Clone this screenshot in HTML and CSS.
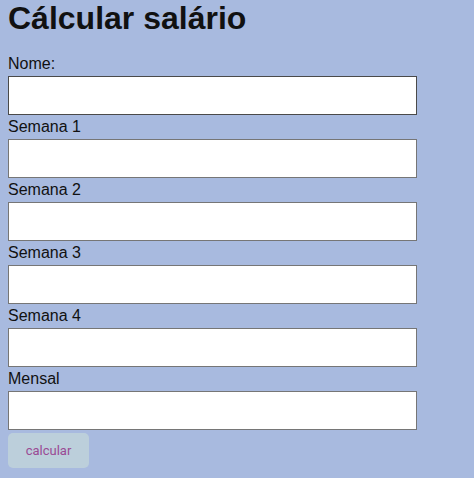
FILE: index.html
```html
<!DOCTYPE html>
<html lang="pt">
<head>
<meta charset="utf-8">
<title>Cálcular salário</title>
<link rel="stylesheet" href="styles.css">
</head>
<body>
<h1 class="title">Cálcular salário</h1>
<form class="form">
  <label class="label" for="nome">Nome:</label>
  <input class="field field-active" id="nome" type="text">
  <label class="label" for="s1">Semana 1</label>
  <input class="field" id="s1" type="text">
  <label class="label" for="s2">Semana 2</label>
  <input class="field" id="s2" type="text">
  <label class="label" for="s3">Semana 3</label>
  <input class="field" id="s3" type="text">
  <label class="label" for="s4">Semana 4</label>
  <input class="field" id="s4" type="text">
  <label class="label" for="mensal">Mensal</label>
  <input class="field" id="mensal" type="text">
  <button class="btn" type="button">calcular</button>
</form>
</body>
</html>
```
FILE: styles.css
```css
html, body {
  margin: 0;
  padding: 0;
}
body {
  background: #a8badf;
  font-family: "Liberation Sans", Arial, sans-serif;
  color: #000;
  padding: 0 8px;
}
.title {
  font-size: 32px;
  font-weight: bold;
  margin: 0;
  line-height: 37px;
  color: #111;
}
.form {
  display: flex;
  flex-direction: column;
  align-items: flex-start;
  margin-top: 18px;
}
.label {
  font-size: 16px;
  line-height: 18px;
  color: #111;
}
.field {
  box-sizing: border-box;
  width: 409px;
  height: 39px;
  margin: 3px 0 3px;
  border: 1px solid #767676;
  background: #fff;
  padding: 0 4px;
  font: 16px "Liberation Sans", Arial, sans-serif;
}
.field-active {
  border-color: #4a4a4a;
}
.btn {
  margin-top: 0;
  width: 81px;
  height: 35px;
  border: none;
  border-radius: 5px;
  background: #bccfdb;
  color: #9a4a94;
  font: 13px "Roboto", "Liberation Sans", sans-serif;
  padding: 0;
}
```
